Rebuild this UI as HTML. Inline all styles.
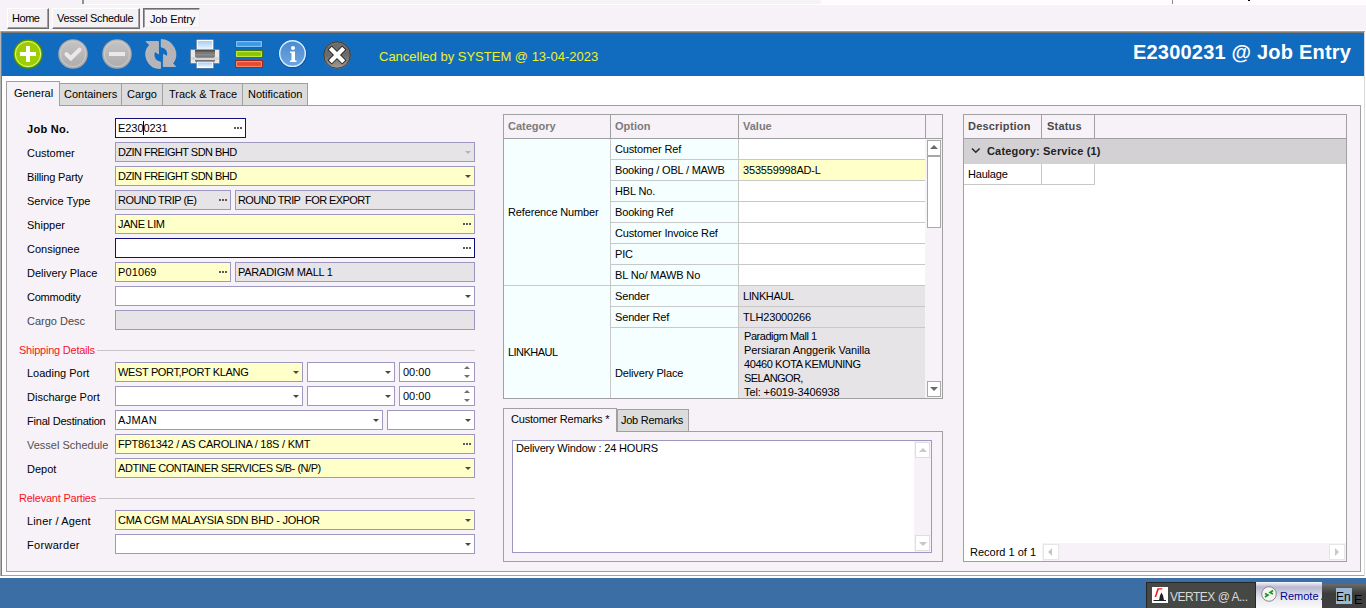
<!DOCTYPE html>
<html><head><meta charset="utf-8">
<style>
*{margin:0;padding:0;box-sizing:border-box}
html,body{width:1366px;height:608px;overflow:hidden;background:#f7f2f7;font-family:"Liberation Sans",sans-serif;font-size:11px;color:#000}
.a{position:absolute}
.t{position:absolute;white-space:pre;line-height:13px}
.btn{position:absolute;top:8px;height:21px;background:#f4f1f4;border:1px solid;border-color:#fff #6d6d6d #6d6d6d #fff;box-shadow:inset -1px -1px 0 #a0a0a0}
.lbl{position:absolute;left:27px;white-space:pre;line-height:13px;margin-top:1px}
.inp{position:absolute;height:20px;border:1px solid #9d98c0;background:#fff;overflow:hidden}
.y{background:#ffffc9}
.d{background:#e7e4e8}
.f{border-color:#10107a}
.v{position:absolute;left:2px;top:3px;white-space:pre;line-height:13px}
.dd{position:absolute;right:3px;top:8px;width:0;height:0;border-left:3.5px solid transparent;border-right:3.5px solid transparent;border-top:3.5px solid #4a4a40}
.el{position:absolute;right:9px;top:8px;width:2px;height:2px;background:#5a5a5a;box-shadow:3px 0 #5a5a5a,6px 0 #5a5a5a}
.su{position:absolute;right:4px;top:3px;width:0;height:0;border-left:3.5px solid transparent;border-right:3.5px solid transparent;border-bottom:3px solid #707070}
.sd{position:absolute;right:4px;top:12px;width:0;height:0;border-left:3.5px solid transparent;border-right:3.5px solid transparent;border-top:3px solid #707070}
.tab{position:absolute;top:83px;height:22px;background:#dcdcdc;border:1px solid #a0a0a0;border-bottom:none}
</style></head><body>

<!-- top strip -->
<div class="a" style="left:84px;top:0;width:737px;height:4px;background:#f5f3f5"></div>
<div class="a" style="left:821px;top:0;width:545px;height:4px;background:#fffbff"></div>
<div class="a" style="left:84px;top:4px;width:1282px;height:1px;background:#fff"></div>
<div class="a" style="left:82px;top:0;width:2px;height:4px;background:#929092"></div>
<div class="a" style="left:1172px;top:0;width:1px;height:4px;background:#8a8a8a"></div><div class="a" style="left:1248px;top:0;width:2px;height:1px;background:#000"></div>
<!-- window tabs -->
<div class="btn" style="left:7px;width:42px"></div><div class="t" style="left:12px;top:12px;letter-spacing:-0.45px">Home</div>
<div class="btn" style="left:52px;width:88px"></div><div class="t" style="left:57px;top:12px;letter-spacing:-0.34px">Vessel Schedule</div>
<div class="a" style="left:143px;top:8px;width:57px;height:20px;background:#f8f6f8;border:1px solid;border-color:#6d6d6d #f0eef0 #f0eef0 #6d6d6d;box-shadow:inset 1px 1px 0 #a0a0a0"></div><div class="t" style="left:150px;top:13px;letter-spacing:-0.15px">Job Entry</div>

<!-- outer frame -->
<div class="a" style="left:0;top:30px;width:1366px;height:1px;background:#fff"></div>
<div class="a" style="left:0;top:31px;width:1366px;height:547px;background:#fff"></div>
<div class="a" style="left:0;top:31px;width:1px;height:545px;background:#b4b4b4"></div>
<div class="a" style="left:1px;top:32px;width:1px;height:544px;background:#807a74"></div>
<div class="a" style="left:1px;top:31px;width:1364px;height:1px;background:#a49c98"></div>
<div class="a" style="left:1px;top:32px;width:1364px;height:1px;background:#807a74"></div>
<div class="a" style="left:2px;top:575px;width:1363px;height:1px;background:#a4a0a4"></div>
<div class="a" style="left:1364px;top:32px;width:1px;height:544px;background:#dcd8dc"></div>

<!-- toolbar -->
<div class="a" style="left:2px;top:33px;width:1362px;height:43px;background:#116cbf"></div>

<svg class="a" style="left:0;top:33px" width="370" height="43" viewBox="0 33 370 43">
<defs>
<linearGradient id="gg" x1="0" y1="0" x2="0" y2="1"><stop offset="0" stop-color="#9ccc00"/><stop offset="1" stop-color="#9cd000"/></linearGradient>
<linearGradient id="gray" x1="0" y1="0" x2="0" y2="1"><stop offset="0" stop-color="#c4c4c4"/><stop offset="1" stop-color="#acacac"/></linearGradient>
<linearGradient id="ib" x1="0" y1="0" x2="0" y2="1"><stop offset="0" stop-color="#4a8ad0"/><stop offset="1" stop-color="#6ea6e0"/></linearGradient>
<linearGradient id="xg" x1="0" y1="0" x2="0" y2="1"><stop offset="0" stop-color="#707070"/><stop offset="0.5" stop-color="#6a6a6a"/><stop offset="1" stop-color="#a4a098"/></linearGradient>
<linearGradient id="pb" x1="0" y1="0" x2="0" y2="1"><stop offset="0" stop-color="#a8ccf4"/><stop offset="1" stop-color="#eef6ff"/></linearGradient>
</defs>
<!-- plus -->
<circle cx="28" cy="54" r="14.8" fill="#4e8a00"/>
<circle cx="28" cy="54" r="13.6" fill="url(#gg)"/>
<circle cx="28" cy="54" r="12.6" fill="none" stroke="#e0f8a0" stroke-width="1"/>
<rect x="20" y="52" width="16" height="4" fill="#fff"/>
<rect x="26" y="46" width="4" height="16" fill="#fff"/>
<!-- check -->
<circle cx="73" cy="54" r="14.8" fill="#a8a6a8"/>
<circle cx="73" cy="54" r="13.8" fill="url(#gray)"/>
<circle cx="73" cy="54" r="12.6" fill="none" stroke="#cfcdcf" stroke-width="0.9"/>
<path d="M66.5 54.2 L70.8 58.3 L79.5 49.8" fill="none" stroke="#ebe7eb" stroke-width="4.2" stroke-linecap="round" stroke-linejoin="miter"/>
<!-- minus -->
<circle cx="117" cy="54" r="14.8" fill="#a8a6a8"/>
<circle cx="117" cy="54" r="13.8" fill="url(#gray)"/>
<circle cx="117" cy="54" r="12.6" fill="none" stroke="#cfcdcf" stroke-width="0.9"/>
<rect x="109" y="52" width="16" height="4" fill="#ebe7eb"/>
<!-- refresh -->
<path d="M146 41.5 L158.5 41.5 L158.5 54 L155 51.5 A7 7 0 0 0 160.5 62 L160.5 68.5 A14 14 0 0 1 149.5 45 Z" fill="#b6b4b6" stroke="#d0cccc" stroke-width="0.6"/>
<path d="M161.2 39.5 A15 15 0 0 1 172.8 63.5 L175.7 66.5 L163.3 66.5 L163.5 54.3 L167.2 56.5 A7 7 0 0 0 161.2 47 Z" fill="#b6b4b6" stroke="#d0cccc" stroke-width="0.6"/>
<!-- printer -->
<rect x="196.3" y="39.5" width="17.4" height="11" fill="#fff" stroke="#3a5a80" stroke-width="0.5"/>
<rect x="197.8" y="41" width="14.4" height="8.5" fill="url(#pb)"/>
<rect x="190.5" y="49.5" width="29" height="14" rx="0.5" fill="#e8e8e8" stroke="#707070" stroke-width="0.6"/>
<rect x="191.5" y="57" width="27" height="3" fill="#d4d4d4"/>
<path d="M195 50 L215 50 L215 56 Q215 57.8 213 57.8 L197 57.8 Q195 57.8 195 56 Z" fill="#7a7a7a"/>
<rect x="195" y="50" width="20" height="1.6" fill="#505050"/>
<rect x="195" y="54" width="20" height="1.5" fill="#8c8c8c"/>
<rect x="195" y="60" width="20" height="1.5" fill="#707070"/>
<rect x="196.3" y="61.3" width="17.4" height="7" fill="#fff" stroke="#3a5a80" stroke-width="0.5"/>
<rect x="197.8" y="62.5" width="14.4" height="4.5" fill="url(#pb)"/>
<!-- bars -->
<rect x="235.5" y="40.5" width="27" height="7" fill="#3a9ae8" stroke="#1a5aa0" stroke-width="0.8"/>
<rect x="236.7" y="41.7" width="24.6" height="4.6" fill="none" stroke="#9ad4ff" stroke-width="0.8"/>
<rect x="235.5" y="50.5" width="27" height="7" fill="#8cc400" stroke="#3a7000" stroke-width="0.8"/>
<rect x="236.7" y="51.7" width="24.6" height="4.6" fill="none" stroke="#d4f860" stroke-width="0.8"/>
<rect x="235.5" y="60.5" width="27" height="7" fill="#e84a30" stroke="#a02010" stroke-width="0.8"/>
<rect x="236.7" y="61.7" width="24.6" height="4.6" fill="none" stroke="#ffa080" stroke-width="0.8"/>
<!-- info -->
<circle cx="292.7" cy="54.4" r="14.2" fill="#0e5aa8"/>
<circle cx="292.5" cy="53.6" r="13.2" fill="url(#ib)"/>
<circle cx="292.5" cy="53.6" r="12.8" fill="none" stroke="#d8eeff" stroke-width="1.4"/>
<circle cx="293" cy="48" r="2" fill="#fff"/>
<path d="M290 51.5 L295 51.5 L295 60.5 L296.5 60.5 L296.5 62 L290 62 L290 60.5 L291.5 60.5 L291.5 53 L290 53 Z" fill="#fff"/>
<!-- close -->
<circle cx="337" cy="55" r="13.7" fill="url(#xg)"/>
<circle cx="337" cy="55" r="13.3" fill="none" stroke="#3c3c3c" stroke-width="1"/>
<path d="M329.6 47.6 L344.4 62.4 M344.4 47.6 L329.6 62.4" stroke="#2a2a2a" stroke-width="6"/>
<path d="M330.3 48.3 L343.7 61.7 M343.7 48.3 L330.3 61.7" stroke="#fff" stroke-width="4.2"/>
</svg>
<div class="t" style="left:379px;top:49px;font-size:13px;line-height:16px;color:#eef028">Cancelled by SYSTEM @ 13-04-2023</div>
<div class="t" style="left:1133px;top:41px;font-size:20px;line-height:23px;font-weight:bold;color:#fff;letter-spacing:0.2px">E2300231 @ Job Entry</div>

<!-- page tabs -->
<div class="tab" style="left:59px;width:63px"></div><div class="t" style="left:64px;top:88px">Containers</div>
<div class="tab" style="left:121px;width:42px"></div><div class="t" style="left:127px;top:88px">Cargo</div>
<div class="tab" style="left:162px;width:81px"></div><div class="t" style="left:169px;top:88px">Track &amp; Trace</div>
<div class="tab" style="left:242px;width:66px"></div><div class="t" style="left:248px;top:88px">Notification</div>
<div class="a" style="left:6px;top:105px;width:1355px;height:467px;border:1px solid #a0a0a0;background:#f7f2f7"></div>
<div class="a" style="left:6px;top:81px;width:54px;height:25px;border:1px solid #a0a0a0;border-bottom:none;background:#f7f2f7"></div><div class="t" style="left:14px;top:87px">General</div>

<!-- left form -->
<div class="lbl" style="top:122px;font-weight:bold;letter-spacing:0.3px">Job No.</div>
<div class="inp f" style="left:115px;top:118px;width:131px"><div class="v" style="letter-spacing:-0.06px">E2300231</div><div class="el"></div></div>
<div class="a" style="left:143px;top:121px;width:1px;height:14px;background:#000"></div>

<div class="lbl" style="top:146px">Customer</div>
<div class="inp d" style="left:115px;top:142px;width:360px"><div class="v" style="letter-spacing:-0.54px">DZIN FREIGHT SDN BHD</div><div class="dd" style="border-top-color:#b4b4b4"></div></div>
<div class="lbl" style="top:170px;letter-spacing:-0.17px">Billing Party</div>
<div class="inp y" style="left:115px;top:166px;width:360px"><div class="v" style="letter-spacing:-0.54px">DZIN FREIGHT SDN BHD</div><div class="dd"></div></div>
<div class="lbl" style="top:194px">Service Type</div>
<div class="inp d" style="left:115px;top:190px;width:116px"><div class="v" style="letter-spacing:-0.52px">ROUND TRIP (E)</div><div class="el"></div></div>
<div class="inp d" style="left:235px;top:190px;width:240px"><div class="v" style="letter-spacing:-0.59px">ROUND TRIP  FOR EXPORT</div></div>
<div class="lbl" style="top:218px">Shipper</div>
<div class="inp y" style="left:115px;top:214px;width:360px"><div class="v" style="letter-spacing:-0.36px">JANE LIM</div><div class="el"></div></div>
<div class="lbl" style="top:242px">Consignee</div>
<div class="inp f" style="left:115px;top:238px;width:360px"><div class="el"></div></div>
<div class="lbl" style="top:266px">Delivery Place</div>
<div class="inp y" style="left:115px;top:262px;width:116px"><div class="v" style="letter-spacing:0.11px">P01069</div><div class="el"></div></div>
<div class="inp d" style="left:235px;top:262px;width:240px"><div class="v" style="letter-spacing:-0.25px">PARADIGM MALL 1</div></div>
<div class="lbl" style="top:290px;letter-spacing:-0.22px">Commodity</div>
<div class="inp" style="left:115px;top:286px;width:360px"><div class="dd"></div></div>
<div class="lbl" style="top:314px;color:#484848">Cargo Desc</div>
<div class="inp d" style="left:115px;top:310px;width:360px"></div>

<div class="t" style="left:19px;top:344px;color:#f8141e;letter-spacing:-0.23px">Shipping Details</div>
<div class="a" style="left:97px;top:350px;width:378px;height:1px;background:#c8c4c8"></div>
<div class="lbl" style="top:366px">Loading Port</div>
<div class="inp y" style="left:115px;top:362px;width:188px"><div class="v" style="letter-spacing:-0.35px">WEST PORT,PORT KLANG</div><div class="dd"></div></div>
<div class="inp" style="left:307px;top:362px;width:88px"><div class="dd"></div></div>
<div class="inp" style="left:399px;top:362px;width:76px"><div class="v" style="letter-spacing:0;left:3px">00:00</div><div class="su"></div><div class="sd"></div></div>
<div class="lbl" style="top:390px">Discharge Port</div>
<div class="inp" style="left:115px;top:386px;width:188px"><div class="dd"></div></div>
<div class="inp" style="left:307px;top:386px;width:88px"><div class="dd"></div></div>
<div class="inp" style="left:399px;top:386px;width:76px"><div class="v" style="letter-spacing:0;left:3px">00:00</div><div class="su"></div><div class="sd"></div></div>
<div class="lbl" style="top:414px;letter-spacing:-0.2px">Final Destination</div>
<div class="inp" style="left:115px;top:410px;width:268px"><div class="v" style="letter-spacing:0.35px">AJMAN</div><div class="dd"></div></div>
<div class="inp" style="left:387px;top:410px;width:88px"><div class="dd"></div></div>
<div class="lbl" style="top:438px;color:#505050">Vessel Schedule</div>
<div class="inp y" style="left:115px;top:434px;width:360px"><div class="v" style="letter-spacing:-0.24px">FPT861342 / AS CAROLINA / 18S / KMT</div><div class="el"></div></div>
<div class="lbl" style="top:462px">Depot</div>
<div class="inp y" style="left:115px;top:458px;width:360px"><div class="v" style="letter-spacing:-0.45px">ADTINE CONTAINER SERVICES S/B- (N/P)</div><div class="dd"></div></div>

<div class="t" style="left:19px;top:492px;color:#f8141e;letter-spacing:-0.23px">Relevant Parties</div>
<div class="a" style="left:99px;top:498px;width:376px;height:1px;background:#c8c4c8"></div>
<div class="lbl" style="top:514px;letter-spacing:0.15px">Liner / Agent</div>
<div class="inp y" style="left:115px;top:510px;width:360px"><div class="v" style="letter-spacing:-0.26px">CMA CGM MALAYSIA SDN BHD - JOHOR</div><div class="dd"></div></div>
<div class="lbl" style="top:538px;letter-spacing:0.3px">Forwarder</div>
<div class="inp" style="left:115px;top:534px;width:360px"><div class="dd"></div></div>


<!-- middle grid -->
<div class="a" style="left:503px;top:114px;width:440px;height:285px;border:1px solid #a0a0a0;background:#f7f2f7"></div>
<div class="a" style="left:503px;top:138px;width:440px;height:1px;background:#a0a0a0"></div>
<div class="a" style="left:610px;top:115px;width:1px;height:23px;background:#a0a0a0"></div>
<div class="a" style="left:738px;top:115px;width:1px;height:23px;background:#a0a0a0"></div>
<div class="a" style="left:925px;top:115px;width:1px;height:23px;background:#a0a0a0"></div>
<div class="t" style="left:508px;top:120px;font-weight:bold;color:#7b7b7b">Category</div>
<div class="t" style="left:615px;top:120px;font-weight:bold;color:#7b7b7b">Option</div>
<div class="t" style="left:743px;top:120px;font-weight:bold;color:#7b7b7b">Value</div>
<div class="a" style="left:504px;top:139px;width:421px;height:259px;background:#f5ffff"></div>
<div class="a" style="left:739px;top:139px;width:186px;height:146px;background:#fff"></div>
<div class="a" style="left:739px;top:160px;width:186px;height:20px;background:#ffffc9"></div>
<div class="a" style="left:739px;top:286px;width:186px;height:112px;background:#e7e4e8"></div>
<div class="a" style="left:610px;top:139px;width:1px;height:259px;background:#c8c8c8"></div>
<div class="a" style="left:738px;top:139px;width:1px;height:259px;background:#c8c8c8"></div>
<div class="a" style="left:611px;top:159px;width:314px;height:1px;background:#c8c8c8"></div>
<div class="a" style="left:611px;top:180px;width:314px;height:1px;background:#c8c8c8"></div>
<div class="a" style="left:611px;top:201px;width:314px;height:1px;background:#c8c8c8"></div>
<div class="a" style="left:611px;top:222px;width:314px;height:1px;background:#c8c8c8"></div>
<div class="a" style="left:611px;top:243px;width:314px;height:1px;background:#c8c8c8"></div>
<div class="a" style="left:611px;top:264px;width:314px;height:1px;background:#c8c8c8"></div>
<div class="a" style="left:504px;top:285px;width:421px;height:1px;background:#c8c8c8"></div>
<div class="a" style="left:611px;top:306px;width:314px;height:1px;background:#c8c8c8"></div>
<div class="a" style="left:611px;top:327px;width:314px;height:1px;background:#c8c8c8"></div>
<div class="t" style="left:615px;top:143px;letter-spacing:-0.15px">Customer Ref</div>
<div class="t" style="left:615px;top:164px;letter-spacing:-0.19px">Booking / OBL / MAWB</div>
<div class="t" style="left:615px;top:185px;letter-spacing:-0.15px">HBL No.</div>
<div class="t" style="left:615px;top:206px;letter-spacing:-0.15px">Booking Ref</div>
<div class="t" style="left:615px;top:227px;letter-spacing:-0.15px">Customer Invoice Ref</div>
<div class="t" style="left:615px;top:248px;letter-spacing:-0.15px">PIC</div>
<div class="t" style="left:615px;top:269px;letter-spacing:-0.15px">BL No/ MAWB No</div>
<div class="t" style="left:508px;top:206px;letter-spacing:-0.15px">Reference Number</div>
<div class="t" style="left:743px;top:164px;letter-spacing:-0.18px">353559998AD-L</div>
<div class="t" style="left:615px;top:290px;letter-spacing:-0.15px">Sender</div>
<div class="t" style="left:615px;top:311px;letter-spacing:-0.15px">Sender Ref</div>
<div class="t" style="left:615px;top:367px;letter-spacing:-0.15px">Delivery Place</div>
<div class="t" style="left:508px;top:346px;letter-spacing:-0.54px">LINKHAUL</div>
<div class="t" style="left:743px;top:290px;letter-spacing:-0.4px">LINKHAUL</div>
<div class="t" style="left:743px;top:311px;letter-spacing:-0.17px">TLH23000266</div>
<div class="t" style="left:744px;top:329px;line-height:14px"><span style="letter-spacing:-0.45px">Paradigm Mall 1</span>
<span style="letter-spacing:-0.08px">Persiaran Anggerik Vanilla</span>
<span style="letter-spacing:-0.42px">40460 KOTA KEMUNING</span>
<span style="letter-spacing:-0.6px">SELANGOR,</span>
<span style="letter-spacing:-0.12px">Tel: +6019-3406938</span></div>
<div class="a" style="left:925px;top:139px;width:17px;height:259px;background:#f7f2f7"></div>
<div class="a" style="left:927px;top:140px;width:14px;height:16px;background:#fff;border:1px solid #a8a8a8"></div>
<div class="a" style="left:930px;top:145px;width:0;height:0;border-left:4px solid transparent;border-right:4px solid transparent;border-bottom:4px solid #6a6a6a"></div>
<div class="a" style="left:927px;top:156px;width:14px;height:72px;background:#fff;border:1px solid #a8a8a8"></div>
<div class="a" style="left:927px;top:381px;width:14px;height:16px;background:#fff;border:1px solid #a8a8a8"></div>
<div class="a" style="left:930px;top:387px;width:0;height:0;border-left:4px solid transparent;border-right:4px solid transparent;border-top:4px solid #6a6a6a"></div>

<!-- remarks -->
<div class="tab" style="left:617px;top:409px;width:72px;height:22px"></div><div class="t" style="left:621px;top:414px;letter-spacing:-0.25px">Job Remarks</div>
<div class="a" style="left:503px;top:431px;width:440px;height:131px;border:1px solid #a0a0a0;background:#f7f2f7"></div>
<div class="a" style="left:503px;top:408px;width:114px;height:24px;border:1px solid #a0a0a0;border-bottom:none;background:#f7f2f7"></div><div class="t" style="left:511px;top:413px;letter-spacing:-0.21px">Customer Remarks *</div>
<div class="a" style="left:512px;top:440px;width:420px;height:113px;border:1px solid #9d98c0;background:#fff"></div>
<div class="t" style="left:516px;top:442px;letter-spacing:-0.16px">Delivery Window : 24 HOURS</div>
<div class="a" style="left:914px;top:441px;width:17px;height:111px;background:#f7f2f7"></div>
<div class="a" style="left:915px;top:442px;width:15px;height:16px;background:#fff;border:1px solid #e0dde0"></div>
<div class="a" style="left:919px;top:448px;width:0;height:0;border-left:4px solid transparent;border-right:4px solid transparent;border-bottom:4px solid #c8c8c8"></div>
<div class="a" style="left:915px;top:535px;width:15px;height:16px;background:#fff;border:1px solid #e0dde0"></div>
<div class="a" style="left:919px;top:542px;width:0;height:0;border-left:4px solid transparent;border-right:4px solid transparent;border-top:4px solid #c8c8c8"></div>

<!-- right panel -->
<div class="a" style="left:963px;top:114px;width:384px;height:448px;border:1px solid #a0a0a0;background:#fff"></div>
<div class="a" style="left:964px;top:115px;width:382px;height:23px;background:#f7f2f7"></div>
<div class="a" style="left:964px;top:138px;width:382px;height:1px;background:#a0a0a0"></div>
<div class="a" style="left:1041px;top:115px;width:1px;height:23px;background:#a0a0a0"></div>
<div class="a" style="left:1094px;top:115px;width:1px;height:23px;background:#a0a0a0"></div>
<div class="t" style="left:968px;top:120px;font-weight:bold;color:#4a4a4a;letter-spacing:0.2px">Description</div>
<div class="t" style="left:1047px;top:120px;font-weight:bold;color:#4a4a4a;letter-spacing:0.2px">Status</div>
<div class="a" style="left:964px;top:139px;width:382px;height:25px;background:#d4d1d4"></div>
<svg class="a" style="left:970px;top:146px" width="12" height="8"><path d="M2 2.5 L5.8 6.2 L9.6 2.5" fill="none" stroke="#2a2a2a" stroke-width="1.6"/></svg>
<div class="t" style="left:987px;top:145px;font-weight:bold;color:#222;letter-spacing:0.17px">Category: Service (1)</div>
<div class="a" style="left:964px;top:184px;width:131px;height:1px;background:#c8c8c8"></div>
<div class="a" style="left:1041px;top:164px;width:1px;height:20px;background:#c8c8c8"></div>
<div class="a" style="left:1094px;top:164px;width:1px;height:21px;background:#c8c8c8"></div>
<div class="t" style="left:968px;top:168px;letter-spacing:-0.2px">Haulage</div>
<div class="a" style="left:1042px;top:543px;width:304px;height:18px;background:#f7f2f7"></div>
<div class="a" style="left:1043px;top:544px;width:16px;height:16px;background:#fff;border:1px solid #e8e5e8"></div>
<div class="a" style="left:1048px;top:548px;width:0;height:0;border-top:4px solid transparent;border-bottom:4px solid transparent;border-right:4px solid #c8c8c8"></div>
<div class="a" style="left:1329px;top:544px;width:16px;height:16px;background:#fff;border:1px solid #e8e5e8"></div>
<div class="a" style="left:1335px;top:548px;width:0;height:0;border-top:4px solid transparent;border-bottom:4px solid transparent;border-left:4px solid #c8c8c8"></div>
<div class="t" style="left:970px;top:546px">Record 1 of 1</div>

<!-- taskbar -->
<div class="a" style="left:0;top:578px;width:1366px;height:30px;background:#3a6ea5"></div>
<div class="a" style="left:1146px;top:582px;width:110px;height:26px;background:#464846;border:1px solid #262626;border-bottom:none"></div>
<div class="a" style="left:1152px;top:587px;width:16px;height:16px;background:#fff"></div>
<svg class="a" style="left:1152px;top:587px" width="16" height="16"><path d="M5.5 1.2 L10.5 1.2 L10 2.6 L6.8 2.6 L4.2 10 L2.6 10 Z" fill="#e81818"/><path d="M7 13.2 L8 8.5 L9.5 5.5 L11 8.5 L12 13.2 Z" fill="#222"/><rect x="1.5" y="13" width="12.5" height="1" fill="#222"/></svg>
<div class="t" style="left:1170px;top:590px;font-size:12px;line-height:14px;color:#d8d8d8;letter-spacing:-0.5px">VERTEX @ A...</div>
<div class="a" style="left:1256px;top:582px;width:66px;height:26px;background:linear-gradient(#f4f4fa 0%,#b8b8d2 20%,#e6e6f0 60%,#fafafa 100%)"></div>
<svg class="a" style="left:1261px;top:586px" width="16" height="16"><circle cx="8" cy="8" r="7.3" fill="#f4f4f4" stroke="#8a8a8a" stroke-width="1"/><path d="M4 11 L7 9 L4 7.5 M12 4.5 L9 6.5 L12 8" fill="none" stroke="#1a9a1a" stroke-width="1.6"/></svg>
<div class="t" style="left:1280px;top:589px;font-size:11px;line-height:14px;color:#00008c">Remote A</div>
<div class="a" style="left:1322px;top:584px;width:44px;height:24px;background:linear-gradient(#6a6a6a,#3c3c3c 40%,#404040)"></div>
<div class="a" style="left:1336px;top:588px;width:16px;height:16px;background:#9cb8d8"></div>
<div class="t" style="left:1336px;top:590px;font-size:12px;line-height:14px;color:#000">En</div>
<div class="t" style="left:1354px;top:594px;font-size:12.5px;line-height:13px;color:#000">E</div>

</body></html>
